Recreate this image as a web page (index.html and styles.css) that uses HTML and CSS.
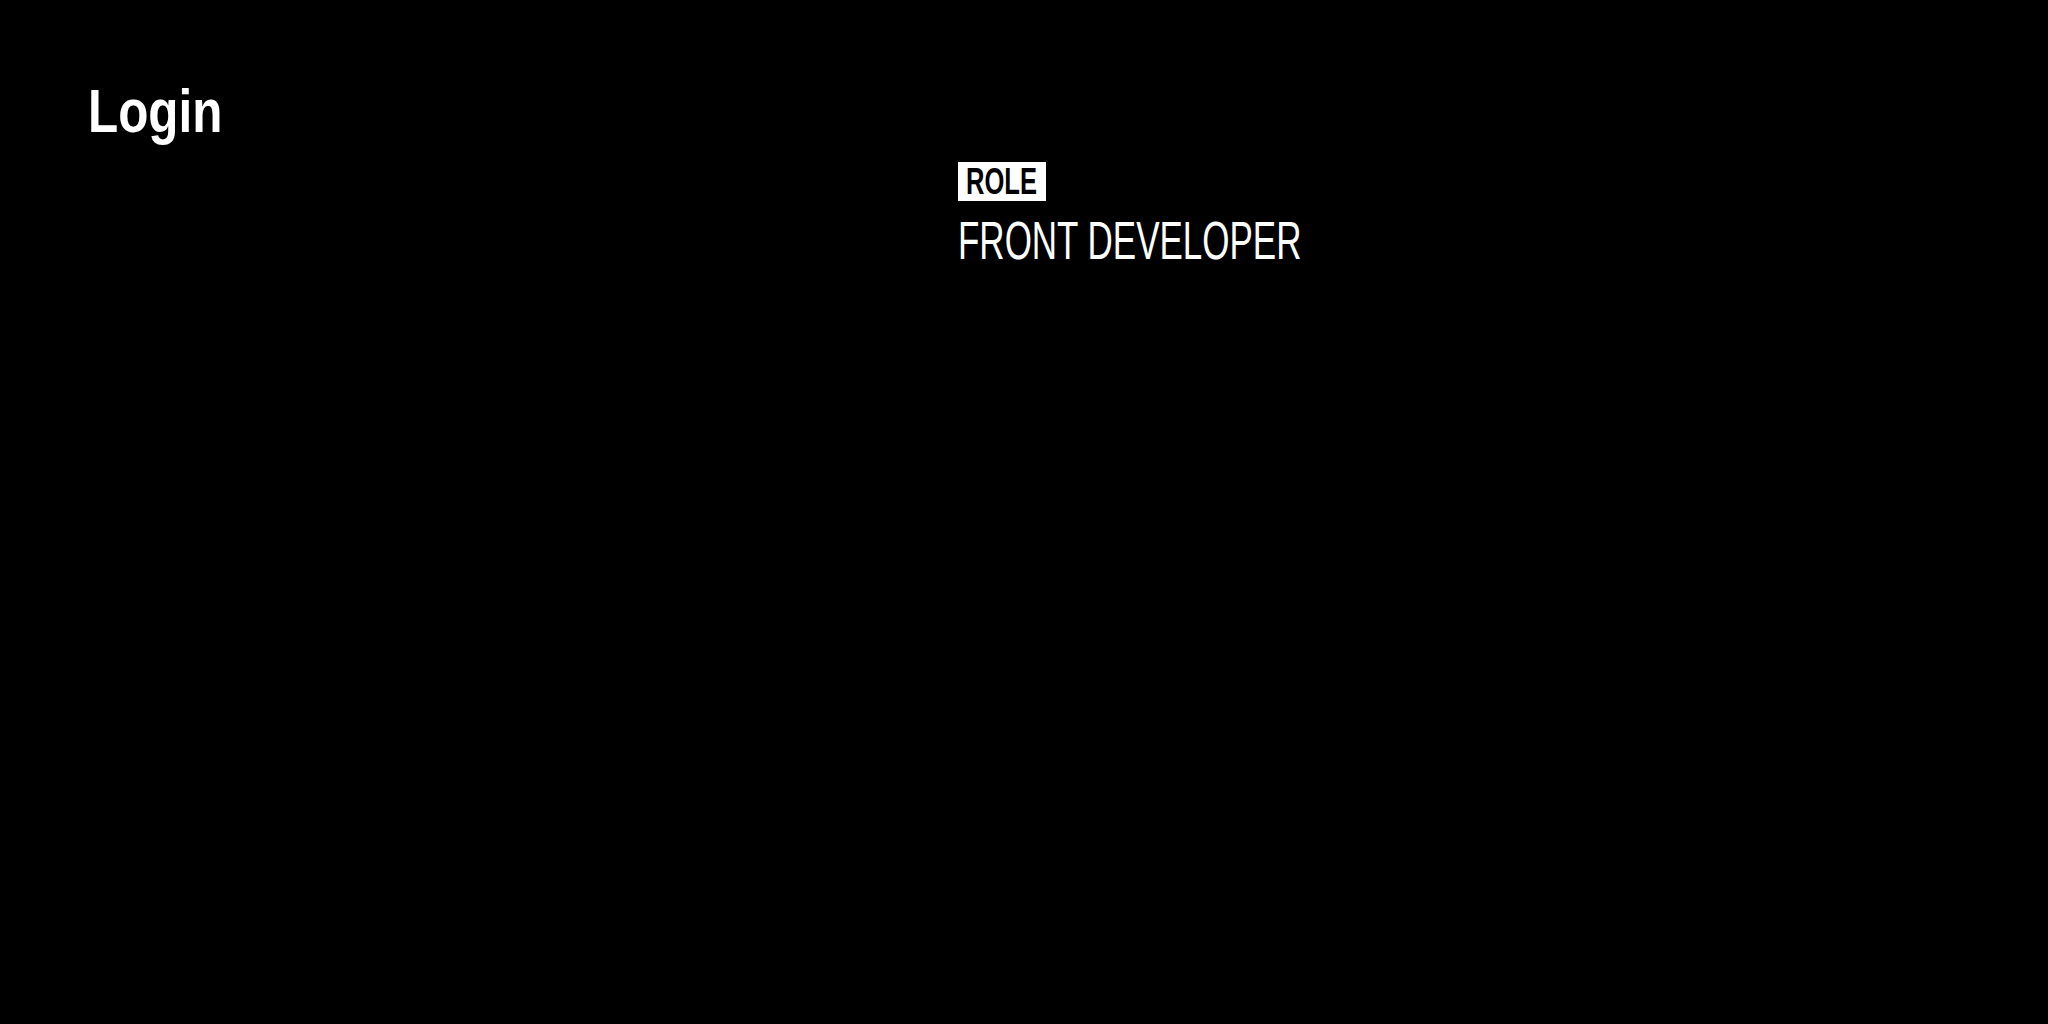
FILE: index.html
```html
<!DOCTYPE html>
<html lang="en">
<head>
<meta charset="utf-8">
<title>Login</title>
<link rel="stylesheet" href="styles.css">
</head>
<body>
<main class="page">
  <section class="left">
    <h1 class="title">Login</h1>
  </section>
  <section class="right">
    <div class="field">
      <span class="badge"><span class="badge-text">ROLE</span></span>
      <p class="value">FRONT DEVELOPER</p>
    </div>
  </section>
</main>
</body>
</html>
```
FILE: styles.css
```css
html, body {
  margin: 0;
  padding: 0;
  background: #000;
  color: #fff;
  width: 2048px;
  height: 1024px;
  overflow: hidden;
}
.page {
  display: flex;
  height: 1024px;
  padding: 0 0 0 88px;
  box-sizing: border-box;
}
.left {
  width: 870px;
  padding-top: 76px;
}
.title {
  margin: 0;
  font-family: "Liberation Sans", Arial, sans-serif;
  font-weight: bold;
  font-size: 61px;
  line-height: 70px;
  white-space: nowrap;
  transform: scaleX(0.81);
  transform-origin: left center;
}
.right {
  padding-top: 162px;
}
.field {
  display: flex;
  flex-direction: column;
  align-items: flex-start;
}
.badge {
  display: block;
  background: #fff;
  color: #000;
  width: 88px;
  height: 39px;
  box-sizing: border-box;
  padding-left: 8px;
  overflow: hidden;
}
.badge-text {
  display: block;
  font-family: "Liberation Sans", Arial, sans-serif;
  font-weight: bold;
  font-size: 37px;
  line-height: 40px;
  white-space: nowrap;
  transform: scaleX(0.69);
  transform-origin: left center;
}
.value {
  margin: 12px 0 0 0;
  font-family: "Liberation Sans", Arial, sans-serif;
  font-weight: normal;
  font-size: 53px;
  line-height: 56px;
  white-space: nowrap;
  transform: scaleX(0.66);
  transform-origin: left center;
}
```
